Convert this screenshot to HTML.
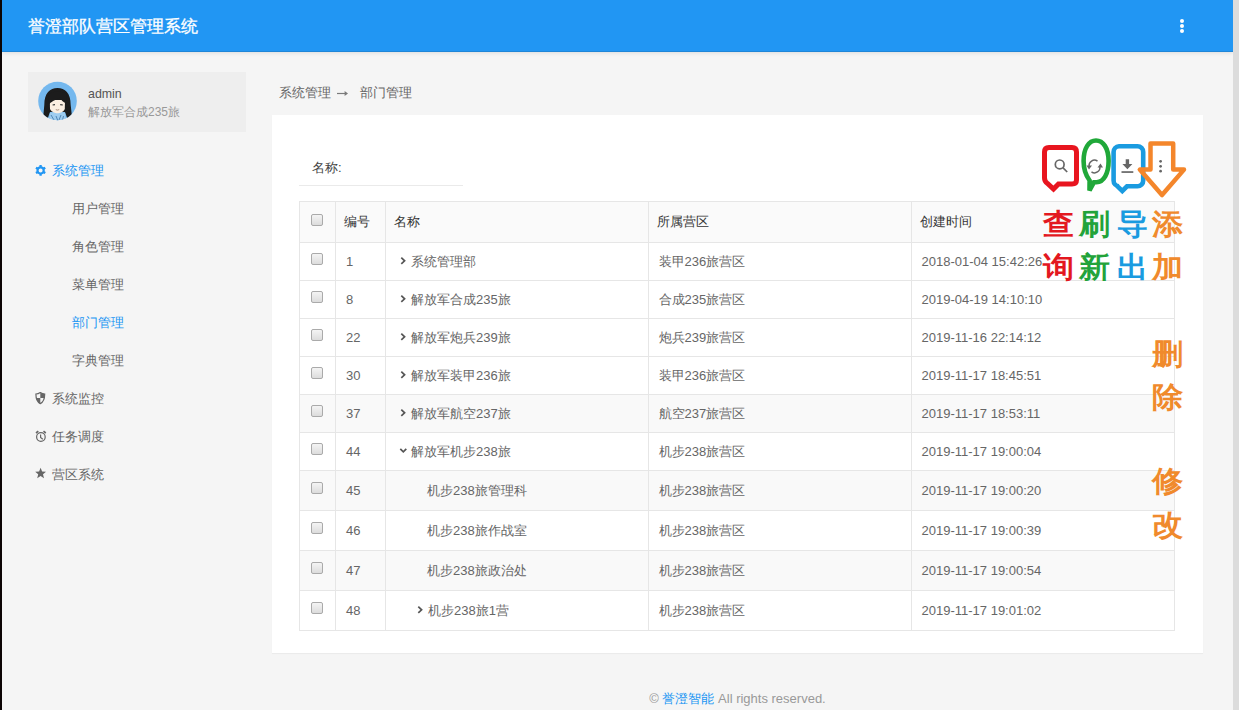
<!DOCTYPE html>
<html><head><meta charset="utf-8">
<style>
*{margin:0;padding:0;box-sizing:border-box}
html,body{width:1239px;height:710px;overflow:hidden}
body{background:#f5f5f5;font-family:"Liberation Sans",sans-serif;font-size:13px;color:#666;position:relative}
.abs{position:absolute}
#lb{left:0;top:0;width:2px;height:710px;background:#0c0505}
#rs{left:1233px;top:0;width:6px;height:710px;background:#dcdcdc}
#hdr{left:2px;top:0;width:1231px;height:52px;background:#2196f3;border-bottom:1px solid #1f86d8;box-shadow:0 1px 4px rgba(0,0,0,.1)}
#title{left:27.5px;top:16px;color:#fff;font-size:17px;-webkit-text-stroke:0.3px #fff;line-height:22px;white-space:nowrap}
.kd{position:absolute;width:4px;height:4px;border-radius:50%;background:#fff;left:1180px}
#user{left:28px;top:72px;width:218px;height:60px;background:#eeeeee}
#avatar{left:38px;top:82px;width:39px;height:39px}
#uname{left:88px;top:86px;color:#555;font-size:12.4px;line-height:16px}
#uorg{left:88px;top:104px;color:#999;font-size:12px;line-height:16px}
.nav{position:absolute;white-space:nowrap;font-size:13px;line-height:16px;color:#666}
.nav.on{color:#2196f3}
#bc{left:279px;top:85px;font-size:13px;line-height:16px;color:#666;white-space:nowrap}
#card{left:272px;top:115px;width:931px;height:538px;background:#fff;box-shadow:0 1px 1px rgba(0,0,0,.04)}
#lbl{left:312px;top:160px;color:#444;font-size:13px;line-height:16px}
#uline{left:299px;top:185px;width:164px;height:1px;background:#eaeaea}
table{position:absolute;left:299px;top:201px;border-collapse:collapse;table-layout:fixed}
td,th{border:1px solid #e6e6e6;font-weight:normal;text-align:left;padding:0 8px;font-size:13px;white-space:nowrap}
th{height:41px;color:#333;background:#fafafa}
td{height:38px;color:#666}
tr.t40 td{height:40px}
tr.g td{background:#f9f9f9}
td .cb{top:-4px!important}
.cb{display:inline-block;width:12px;height:12px;border:1px solid #aaa;border-radius:2px;background:linear-gradient(#f4f4f4,#dcdcdc);vertical-align:middle;position:relative;top:-3px}
.chev{display:inline-block;vertical-align:middle;margin-left:5px;margin-right:2px;position:relative;top:-1px}
tr td:first-child,tr th:first-child{padding-left:11px}
tr td:nth-child(2){padding-left:10px}
tr td:nth-child(4),tr td:nth-child(5){padding-left:9.5px}
#foot{left:272px;width:931px;top:691px;text-align:center;color:#999;font-size:13px;line-height:16px}
.ann{position:absolute;font-size:29px;line-height:30px;font-weight:bold;white-space:nowrap;transform:scaleX(1.07);transform-origin:0 0}
</style></head><body>
<div id="lb" class="abs"></div>
<div id="hdr" class="abs"></div>
<div id="rs" class="abs"></div>
<div id="title" class="abs">誉澄部队营区管理系统</div>
<div class="kd" style="top:18.8px"></div><div class="kd" style="top:24px"></div><div class="kd" style="top:29.3px"></div>

<div id="user" class="abs"></div>
<svg class="abs" style="left:35px;top:79px" width="45" height="45" viewBox="0 0 45 45">
<defs><clipPath id="cc"><circle cx="22.5" cy="22" r="19.3"/></clipPath></defs>
<circle cx="22.5" cy="22" r="19.3" fill="#74b8ee"/>
<g clip-path="url(#cc)">
<path d="M9.3 26 C9.3 14 15 9 22.5 9 C30 9 35.7 14 35.7 26 L36.8 36 L32.5 40 L30 33 L15 33 L12.5 40 L8.3 37 Z" fill="#1c1c1c"/>
<path d="M13.5 45 L15 33.5 L30 33.5 L31.5 45 Z" fill="#9fcdf0"/>
<path d="M16 36 L19 41 M21 37 L23 42 M26 36 L24 41 M28.5 37 L27 43" stroke="#4a7fae" stroke-width="0.9"/>
<path d="M14.8 21 L30 21 L29.8 30 C28 33.5 25 34.2 22.5 34.2 C20 34.2 17 33.5 15 30 Z" fill="#fbefe2"/>
<path d="M13.8 26 C15.5 22.5 20 21.5 25 18.5 C26 21 28 23 31.2 24.5 L31.5 15 C28 11.5 17 11.5 13.8 15 Z" fill="#1c1c1c"/>
<path d="M17.6 26 L20 25.6 M25.2 25.6 L27.8 26" stroke="#333" stroke-width="1.1"/>
<path d="M20.8 30.6 Q22.5 31.6 24.2 30.6" stroke="#8a6a5a" stroke-width="0.7" fill="none"/>
</g>
</svg>
<div id="uname" class="abs">admin</div>
<div id="uorg" class="abs">解放军合成235旅</div>

<svg class="abs" style="left:0;top:0" width="260" height="500" viewBox="0 0 260 500">
<path fill="#2196f3" fill-rule="evenodd" d="M39.48 166.25 L39.45 165.02 L41.75 165.02 L41.72 166.25 L43.64 167.36 L44.69 166.72 L45.83 168.70 L44.75 169.29 L44.75 171.51 L45.83 172.10 L44.69 174.08 L43.64 173.44 L41.72 174.55 L41.75 175.78 L39.45 175.78 L39.48 174.55 L37.56 173.44 L36.51 174.08 L35.37 172.10 L36.45 171.51 L36.45 169.29 L35.37 168.70 L36.51 166.72 L37.56 167.36Z M42.6 170.4 A2 2 0 1 0 38.6 170.4 A2 2 0 1 0 42.6 170.4Z"/>
<path fill="none" stroke="#666" stroke-width="1.2" d="M40.3 392.6 C38.8 393.6 37.2 394 35.9 394 C35.9 399 37 402 40.3 403.6 C43.6 402 44.7 399 44.7 394 C43.4 394 41.8 393.6 40.3 392.6Z"/>
<path fill="#666" d="M40.3 392.6 C41.8 393.6 43.4 394 44.7 394 C44.7 395.6 44.6 396.9 44.5 398 L40.3 398 Z M40.3 398 L36.1 398 C36.5 400.6 37.7 402.4 40.3 403.6Z"/>
<g fill="none" stroke="#666" stroke-width="1.2"><circle cx="40.9" cy="437" r="4.3"/><path d="M40.6 434.6 V437.4 L42.8 439.2"/><path d="M36 433 L38.3 431.2 M45.8 433 L43.5 431.2" stroke-width="1.6"/></g>
<path fill="#666" d="M40.6 467.8 L42.1 471.6 L46 471.8 L43 474.3 L44 478.2 L40.6 476 L37.2 478.2 L38.2 474.3 L35.2 471.8 L39.1 471.6Z"/>
</svg>
<div class="nav on" style="left:52px;top:163px">系统管理</div>
<div class="nav" style="left:72px;top:201px">用户管理</div>
<div class="nav" style="left:72px;top:239px">角色管理</div>
<div class="nav" style="left:72px;top:277px">菜单管理</div>
<div class="nav on" style="left:72px;top:315px">部门管理</div>
<div class="nav" style="left:72px;top:353px">字典管理</div>
<div class="nav" style="left:52px;top:391px">系统监控</div>
<div class="nav" style="left:52px;top:429px">任务调度</div>
<div class="nav" style="left:52px;top:467px">营区系统</div>

<div id="bc" class="abs">系统管理</div><div class="abs" style="left:360px;top:85px;font-size:13px;line-height:16px;color:#666;white-space:nowrap">部门管理</div>
<svg class="abs" style="left:330px;top:84px" width="24" height="16" viewBox="330 84 24 16"><path d="M337 93.5 H346.5" stroke="#7a7a7a" stroke-width="1.2"/><path d="M344.6 91 L348 93.5 L344.6 96 Z" fill="#7a7a7a"/></svg>

<div id="card" class="abs"></div>
<div id="lbl" class="abs">名称:</div>
<div id="uline" class="abs"></div>

<table>
<colgroup><col style="width:36px"><col style="width:50px"><col style="width:263px"><col style="width:263px"><col style="width:263px"></colgroup>
<tr><th><span class="cb"></span></th><th>编号</th><th>名称</th><th>所属营区</th><th>创建时间</th></tr>
<tr><td><span class="cb"></span></td><td>1</td><td><svg class="chev" width="10" height="13" viewBox="0 0 10 13"><path d="M2.3 2.7 L5.6 5.8 L2.3 8.9" fill="none" stroke="#555" stroke-width="1.7"/></svg>系统管理部</td><td>装甲236旅营区</td><td>2018-01-04 15:42:26</td></tr>
<tr><td><span class="cb"></span></td><td>8</td><td><svg class="chev" width="10" height="13" viewBox="0 0 10 13"><path d="M2.3 2.7 L5.6 5.8 L2.3 8.9" fill="none" stroke="#555" stroke-width="1.7"/></svg>解放军合成235旅</td><td>合成235旅营区</td><td>2019-04-19 14:10:10</td></tr>
<tr><td><span class="cb"></span></td><td>22</td><td><svg class="chev" width="10" height="13" viewBox="0 0 10 13"><path d="M2.3 2.7 L5.6 5.8 L2.3 8.9" fill="none" stroke="#555" stroke-width="1.7"/></svg>解放军炮兵239旅</td><td>炮兵239旅营区</td><td>2019-11-16 22:14:12</td></tr>
<tr><td><span class="cb"></span></td><td>30</td><td><svg class="chev" width="10" height="13" viewBox="0 0 10 13"><path d="M2.3 2.7 L5.6 5.8 L2.3 8.9" fill="none" stroke="#555" stroke-width="1.7"/></svg>解放军装甲236旅</td><td>装甲236旅营区</td><td>2019-11-17 18:45:51</td></tr>
<tr class="g"><td><span class="cb"></span></td><td>37</td><td><svg class="chev" width="10" height="13" viewBox="0 0 10 13"><path d="M2.3 2.7 L5.6 5.8 L2.3 8.9" fill="none" stroke="#555" stroke-width="1.7"/></svg>解放军航空237旅</td><td>航空237旅营区</td><td>2019-11-17 18:53:11</td></tr>
<tr><td><span class="cb"></span></td><td>44</td><td><svg class="chev" width="10" height="13" viewBox="0 0 10 13"><path d="M1.3 3.9 L4.3 6.9 L7.3 3.9" fill="none" stroke="#555" stroke-width="1.7"/></svg>解放军机步238旅</td><td>机步238旅营区</td><td>2019-11-17 19:00:04</td></tr>
<tr class="g t40"><td><span class="cb"></span></td><td>45</td><td style="padding-left:41px">机步238旅管理科</td><td>机步238旅营区</td><td>2019-11-17 19:00:20</td></tr>
<tr class="t40"><td><span class="cb"></span></td><td>46</td><td style="padding-left:41px">机步238旅作战室</td><td>机步238旅营区</td><td>2019-11-17 19:00:39</td></tr>
<tr class="g t40"><td><span class="cb"></span></td><td>47</td><td style="padding-left:41px">机步238旅政治处</td><td>机步238旅营区</td><td>2019-11-17 19:00:54</td></tr>
<tr class="t40"><td><span class="cb"></span></td><td>48</td><td style="padding-left:25px"><svg class="chev" width="10" height="13" viewBox="0 0 10 13"><path d="M2.3 2.7 L5.6 5.8 L2.3 8.9" fill="none" stroke="#555" stroke-width="1.7"/></svg>机步238旅1营</td><td>机步238旅营区</td><td>2019-11-17 19:01:02</td></tr>
</table>

<div id="foot" class="abs">© <span style="color:#2196f3">誉澄智能</span> All rights reserved.</div>


<svg class="abs" style="left:0;top:0" width="1239" height="710" viewBox="0 0 1239 710">
<g fill="none" stroke="#666" stroke-width="1.7">
<circle cx="1059.7" cy="164.4" r="4.4"/><path d="M1062.8 167.6 L1067.2 172"/>
</g>
<g fill="none" stroke="#666" stroke-width="1.5">
<path d="M1097.5 161.2 A5.3 5.3 0 0 0 1089.2 166.5"/><path d="M1091.5 171.8 A5.3 5.3 0 0 0 1099.8 166.5"/>
</g>
<path d="M1086.5 165.5 L1092 165.5 L1089 169.5 Z" fill="#666"/>
<path d="M1097.5 167.5 L1103 167.5 L1100.5 163.5 Z" fill="#666"/>
<g fill="#666"><path d="M1125.7 159.3h3.4v4.6h3.3l-5 5.3-5-5.3h3.3z"/><rect x="1121.5" y="171.2" width="11.8" height="1.7"/></g>
<g fill="#666"><circle cx="1160.6" cy="161.3" r="1.35"/><circle cx="1160.6" cy="166.3" r="1.35"/><circle cx="1160.6" cy="171.2" r="1.35"/></g>
<path d="M1049 147.5 H1072 Q1076.5 147.5 1076.5 152 V180 Q1076.5 184 1072 184 H1058.5 L1053.5 189 L1047.5 183.5 Q1044.5 181.5 1044.5 178 V152 Q1044.5 147.5 1049 147.5 Z" fill="none" stroke="#e8151f" stroke-width="5" stroke-linejoin="miter"/>
<path d="M1089.5 190.5 L1089.6 180.5 C1085.5 175 1083.6 168 1083.6 161 C1083.6 148 1089 140.5 1096 140.5 C1103 140.5 1108.6 148 1108.6 161 C1108.6 173 1104 182.2 1096.5 182.2 L1094 182.2 Z" fill="none" stroke="#20a839" stroke-width="4.6" stroke-linejoin="miter" stroke-miterlimit="3"/>
<path d="M1119 146.2 H1137.5 A5.7 5.7 0 0 1 1143.2 152 V180.5 A5.7 5.7 0 0 1 1137.5 186.3 H1127 L1122.3 191 L1117.5 186.3 H1119 A5.7 5.7 0 0 1 1113.6 180.5 V152 A5.7 5.7 0 0 1 1119 146.2 Z" fill="none" stroke="#1a9be0" stroke-width="4.6"/>
<path d="M1150.5 143.5 H1173.2 V169.6 H1184 L1162 195 L1139.8 169.6 H1150.5 Z" fill="none" stroke="#f4862b" stroke-width="4.5" stroke-linejoin="round"/>
</svg>

<!-- annotations -->
<div class="ann" style="left:1043px;top:209px;color:#e3181f">查</div>
<div class="ann" style="left:1079px;top:209px;color:#22a33a">刷</div>
<div class="ann" style="left:1117px;top:209px;color:#1a9be0">导</div>
<div class="ann" style="left:1152px;top:209px;color:#f08a2c">添</div>
<div class="ann" style="left:1043px;top:252px;color:#e3181f">询</div>
<div class="ann" style="left:1079px;top:252px;color:#22a33a">新</div>
<div class="ann" style="left:1117px;top:252px;color:#1a9be0">出</div>
<div class="ann" style="left:1152px;top:252px;color:#f08a2c">加</div>
<div class="ann" style="left:1152px;top:339px;color:#f08a2c">删</div>
<div class="ann" style="left:1152px;top:382px;color:#f08a2c">除</div>
<div class="ann" style="left:1152px;top:466px;color:#f08a2c">修</div>
<div class="ann" style="left:1152px;top:510px;color:#f08a2c">改</div>
</body></html>
